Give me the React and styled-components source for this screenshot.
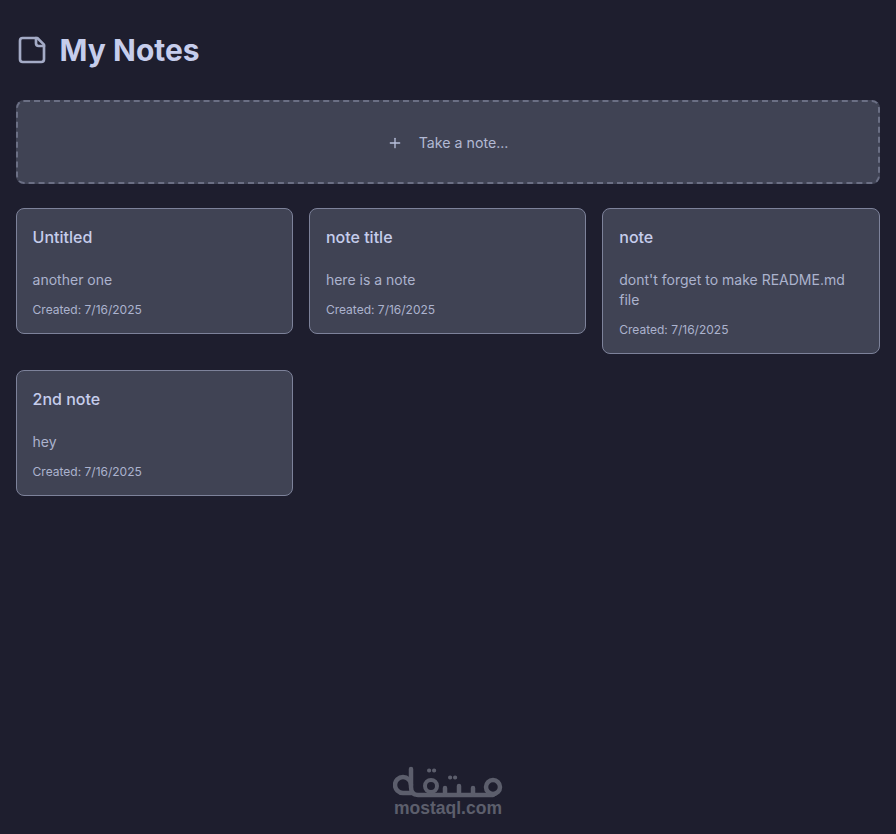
import React from "react";
import styled, { createGlobalStyle } from "styled-components";

const Global = createGlobalStyle`
  html, body { margin: 0; padding: 0; background: #1e1e2e; }
  body { font-family: Inter, "Liberation Sans", sans-serif; }
  * { box-sizing: border-box; }
`;
const Page = styled.div`
  position: relative;
  height: 834px;
  padding: 32px 16.4px 0 15.6px;
  background: #1e1e2e;
  overflow: hidden;
`;
const Header = styled.header`
  display: flex;
  align-items: center;
  gap: 12px;
  height: 36px;
  margin-bottom: 32px;
  opacity: 0.99;
`;
const Title = styled.h1`
  margin: 0;
  font-size: 30px;
  line-height: 36px;
  font-weight: 700;
  color: #c8d0ef;
`;
const AddBar = styled.div`
  display: flex;
  align-items: center;
  justify-content: center;
  gap: 16px;
  height: 84px;
  margin-bottom: 24px;
  padding-top: 1px;
  background: #414455;
  border: 2px dashed #6c7086;
  border-radius: 8px;
  color: #b4bbd6;
  font-size: 14.2px;
  line-height: 22px;
  opacity: 0.99;
`;
const Grid = styled.div`
  display: grid;
  grid-template-columns: repeat(3, 1fr);
  gap: 16px;
  align-items: start;
`;
const Card = styled.article`
  padding: 16px 16px 15px;
  background: #414455;
  border: 1px solid #7f849c;
  border-radius: 8px;
  opacity: 0.99;
`;
const CardTitle = styled.h3`
  margin: 0 0 21px;
  font-size: 16px;
  line-height: 24px;
  font-weight: 500;
  color: #c8d0ef;
`;
const CardBody = styled.p`
  margin: 0 0 12px;
  font-size: 14px;
  line-height: 20px;
  color: #aeb5d0;
`;
const CardDate = styled.div`
  font-size: 12px;
  line-height: 16px;
  color: #aeb5d0;
`;
const Logo = styled.div`
  position: absolute;
  left: 393px;
  top: 766px;
  width: 110px;
  display: flex;
  flex-direction: column;
  align-items: center;
  color: #5c5e6c;
`;
const LogoMark = styled.svg`
  display: block;
`;
const LogoText = styled.div`
  font-family: "Liberation Sans", sans-serif;
  font-weight: 700;
  font-size: 17.5px;
  line-height: 18px;
  margin-top: -1px;
`;

const notes = [
  ["Untitled", "another one"],
  ["note title", "here is a note"],
  ["note", "dont't forget to make README.md file"],
  ["2nd note", "hey"],
];

export default function App() {
  return (
    <Page>
      <Global />
      <Header>
        <svg width="32" height="32" viewBox="0 0 24 24" fill="none" stroke="#a6adc8" strokeWidth="2" strokeLinecap="round" strokeLinejoin="round">
          <path d="M16 3H5a2 2 0 0 0-2 2v14a2 2 0 0 0 2 2h14a2 2 0 0 0 2-2V8Z" />
          <path d="M15 3v4a2 2 0 0 0 2 2h4" />
        </svg>
        <Title>My Notes</Title>
      </Header>
      <AddBar>
        <svg width="16" height="16" viewBox="0 0 24 24" fill="none" stroke="#bac2de" strokeWidth="2" strokeLinecap="round" strokeLinejoin="round">
          <path d="M5 12h14" />
          <path d="M12 5v14" />
        </svg>
        <span>Take a note...</span>
      </AddBar>
      <Grid>
        {notes.map(([t, b]) => (
          <Card key={t}>
            <CardTitle>{t}</CardTitle>
            <CardBody>{b}</CardBody>
            <CardDate>Created: 7/16/2025</CardDate>
          </Card>
        ))}
      </Grid>
      <Logo>
        <LogoMark width="110" height="34" viewBox="0 0 110 34" fill="none" stroke="#5c5e6c" strokeWidth="4.5" strokeLinecap="round" strokeLinejoin="round">
          <path d="M18 3V21c0 5 2 8 7 8H100" />
          <path d="M18 19a8 8 0 1 0-8 8h8" />
          <circle cx="38" cy="20" r="6" strokeWidth="4" />
          <path d="M52 22v6M66 20v8M80 22v6" />
          <circle cx="100" cy="21" r="7" />
          <path d="M36 4.5h.2M41 4.5h.2" strokeWidth="4" />
          <path d="M57 11.5h.2M62 11.5h.2" strokeWidth="4" />
        </LogoMark>
        <LogoText>mostaql.com</LogoText>
      </Logo>
    </Page>
  );
}
